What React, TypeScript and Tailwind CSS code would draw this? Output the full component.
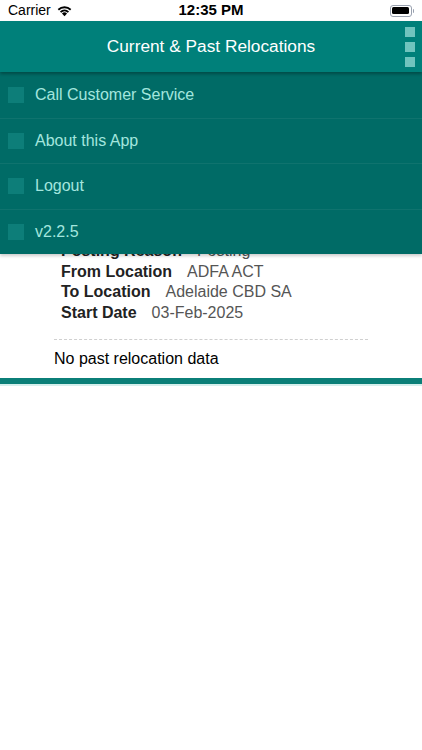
import React from 'react';

const menuItems = ['Call Customer Service', 'About this App', 'Logout', 'v2.2.5'];

const details = [
  { label: 'Posting Reason', value: 'Posting' },
  { label: 'From Location', value: 'ADFA ACT' },
  { label: 'To Location', value: 'Adelaide CBD SA' },
  { label: 'Start Date', value: '03-Feb-2025' },
];

const StatusBar = () => (
  <div className="relative flex h-[21px] items-center bg-white px-2 text-[14px] text-black">
    <div className="flex items-center gap-[5px]">
      <span>Carrier</span>
      <svg width="17" height="13" viewBox="0 0 16 12" fill="black">
        <path d="M8 11.5 L5.6 8.9 A3.4 3.4 0 0 1 10.4 8.9 Z" />
        <path d="M3.7 6.9 A6.2 6.2 0 0 1 12.3 6.9 L11.1 8.2 A4.5 4.5 0 0 0 4.9 8.2 Z" />
        <path d="M1.6 4.7 A9.2 9.2 0 0 1 14.4 4.7 L13.2 6 A7.5 7.5 0 0 0 2.8 6 Z" />
      </svg>
    </div>
    <span className="absolute left-1/2 -translate-x-1/2 text-[15px] font-semibold">12:35 PM</span>
    <div className="ml-auto flex items-center">
      <div className="flex h-[12px] w-[22px] items-center rounded-[3px] border border-gray-400 p-[1.5px]">
        <div className="h-full w-full rounded-[1.5px] bg-black" />
      </div>
      <div className="ml-[1px] h-[4px] w-[1.5px] rounded-r bg-gray-400" />
    </div>
  </div>
);

export default function App() {
  return (
    <div className="relative min-h-[750px] bg-white" style={{ fontFamily: '"Liberation Sans", Arial, sans-serif' }}>
      <StatusBar />

      <div className="relative z-20 flex h-[51px] items-center justify-center bg-[#00807a] shadow-[0_2px_3px_rgba(0,0,0,0.3)]">
        <h1 className="text-[17.3px] text-white">Current &amp; Past Relocations</h1>
        <div className="absolute right-[7px] top-[6px] flex flex-col gap-[5px]">
          <div className="h-[10px] w-[10px] bg-[#70c4be]" />
          <div className="h-[10px] w-[10px] bg-[#70c4be]" />
          <div className="h-[10px] w-[10px] bg-[#70c4be]" />
        </div>
      </div>

      <div className="px-[54px] pt-[169px]">
        <div className="flex flex-col pl-[7px]">
          {details.map((d) => (
            <div key={d.label} className="flex h-[20.5px] items-center gap-[15px] text-[16px]">
              <span className="font-bold text-[#222]">{d.label}</span>
              <span className="text-[#555]">{d.value}</span>
            </div>
          ))}
        </div>
        <div className="mt-[16px] w-[314px] border-t border-dashed border-[#d0d0d0]" />
        <div className="flex h-[38px] items-center text-[16px] text-black">No past relocation data</div>
      </div>
      <div className="h-[6px] bg-[#0b7f78]" />
      <div className="h-[2px] bg-[#d5efec]" />

      <div className="absolute left-0 right-0 top-[72px] z-10 bg-[#006b66] shadow-[0_2px_3px_rgba(0,0,0,0.2)]">
        {menuItems.map((item, i) => (
          <div
            key={item}
            className={`flex h-[45.5px] items-center gap-[11px] pl-[8px] ${i > 0 ? 'border-t border-[#0f736e]' : ''}`}
          >
            <div className="h-[16px] w-[16px] bg-[#0d7e79]" />
            <span className="text-[16px] text-[#a3e6de]">{item}</span>
          </div>
        ))}
      </div>
    </div>
  );
}
